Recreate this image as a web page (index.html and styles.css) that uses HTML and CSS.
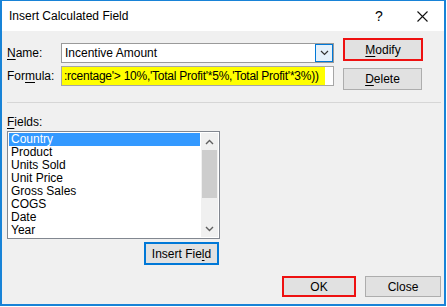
FILE: index.html
```html
<!DOCTYPE html>
<html lang="en">
<head>
    <meta charset="UTF-8">
    <title>Insert Calculated Field</title>
    <link rel="stylesheet" href="styles.css">
</head>
<body>
<div class="window">
    <div class="titlebar">
        <span class="title">Insert Calculated Field</span>
        <span class="help-btn">?</span>
        <span class="close-btn">
            <svg width="11" height="11" viewBox="0 0 11 11">
                <path d="M0.5 0.5 L10.5 10.5 M10.5 0.5 L0.5 10.5" stroke="#111" stroke-width="1.1" fill="none"/>
            </svg>
        </span>
    </div>

    <div class="dialog-body">
        <div class="top-area">
            <div class="form">
                <div class="form-row">
                    <label class="form-label"><u>N</u>ame:</label>
                    <div class="combo">
                        <span class="combo-text">Incentive Amount</span>
                        <span class="combo-btn">
                            <svg width="9" height="6" viewBox="0 0 9 6">
                                <path d="M1 1 L4.5 4.5 L8 1" stroke="#333" stroke-width="1.2" fill="none"/>
                            </svg>
                        </span>
                    </div>
                </div>
                <div class="form-row formula-row">
                    <label class="form-label">For<u>m</u>ula:</label>
                    <div class="textbox">
                        <span class="marker">:rcentage'&gt; 10%,'Total Profit'*5%,'Total Profit'*3%))</span>
                    </div>
                </div>
            </div>
            <div class="side-buttons">
                <button class="btn btn-marked btn-modify"><u>M</u>odify</button>
                <button class="btn btn-delete"><u>D</u>elete</button>
            </div>
        </div>

        <div class="separator"></div>

        <div class="fields-label"><u>F</u>ields:</div>
        <div class="listbox">
            <ul class="list-items">
                <li class="list-item selected">Country</li>
                <li class="list-item">Product</li>
                <li class="list-item">Units Sold</li>
                <li class="list-item">Unit Price</li>
                <li class="list-item">Gross Sales</li>
                <li class="list-item">COGS</li>
                <li class="list-item">Date</li>
                <li class="list-item">Year</li>
            </ul>
            <div class="scrollbar">
                <span class="scroll-arrow">
                    <svg width="9" height="6" viewBox="0 0 9 6">
                        <path d="M1 5 L4.5 1.5 L8 5" stroke="#606060" stroke-width="1.4" fill="none"/>
                    </svg>
                </span>
                <span class="scroll-thumb"></span>
                <span class="scroll-track"></span>
                <span class="scroll-arrow">
                    <svg width="9" height="6" viewBox="0 0 9 6">
                        <path d="M1 1 L4.5 4.5 L8 1" stroke="#606060" stroke-width="1.4" fill="none"/>
                    </svg>
                </span>
            </div>
        </div>
        <div class="insert-row">
            <button class="btn btn-focus">Insert Fie<u>l</u>d</button>
        </div>

        <div class="footer">
            <button class="btn btn-marked btn-ok">OK</button>
            <button class="btn btn-close">Close</button>
        </div>
    </div>
</div>
</body>
</html>
```

FILE: styles.css
```css
/*reset*/
* {
    margin: 0;
    padding: 0;
    box-sizing: border-box;
}

body {
    background-color: #fff;
    font-family: "Liberation Sans", Arial, sans-serif;
    font-size: 12px;
    color: #000;
}

li {
    list-style: none;
}

u {
    text-decoration: underline;
    text-underline-offset: 2px;
}

.window {
    width: 446px;
    height: 306px;
    border: 2px solid #1883d7;
    border-top-width: 1px;
    display: flex;
    flex-direction: column;
}

/*title bar*/
.titlebar {
    height: 30px;
    background-color: #fff;
    display: flex;
    align-items: center;
    padding-left: 7px;
}

.title {
    font-size: 12px;
    flex: 1;
}

.help-btn {
    font-size: 14px;
    width: 10px;
    margin-right: 32px;
}

.close-btn {
    display: flex;
    width: 11px;
    margin-right: 16px;
}

.dialog-body {
    flex: 1;
    background-color: #f0f0f0;
    padding: 7px 3px 0 5px;
}

/*name + formula*/
.top-area {
    display: flex;
}

.form {
    padding-top: 5px;
}

.form-row {
    display: flex;
    align-items: center;
    height: 20px;
}

.formula-row {
    margin-top: 3px;
}

.form-label {
    width: 54px;
}

.combo {
    width: 273px;
    height: 20px;
    background-color: #fff;
    border: 1px solid #9a9a9a;
    display: flex;
    align-items: center;
    justify-content: space-between;
    padding-left: 3px;
}

.combo-btn {
    width: 18px;
    height: 18px;
    border: 1px solid #0078d7;
    background-color: #e5f1fb;
    display: flex;
    align-items: center;
    justify-content: center;
}

.textbox {
    width: 273px;
    height: 20px;
    background-color: #fff;
    border: 1px solid #a6a6a6;
    white-space: nowrap;
}

/*黄色高亮，宽度随文字*/
.marker {
    display: inline-block;
    height: 18px;
    line-height: 18px;
    background-color: #ffff00;
    padding: 0 6px 0 2px;
    letter-spacing: -0.25px;
}

.side-buttons {
    margin-left: 9px;
    display: flex;
    flex-direction: column;
}

/*buttons*/
.btn {
    font-family: inherit;
    font-size: 12px;
    color: #000;
    background-color: #e1e1e1;
    border: 1px solid #adadad;
    outline: none;
}

.btn-marked {
    border: 2px solid #ee1111;
}

.btn-focus {
    border: 2px solid #0078d7;
}

.btn-modify {
    width: 80px;
    height: 23px;
}

.btn-delete {
    width: 79px;
    height: 22px;
    margin-top: 7px;
}

.separator {
    height: 1px;
    margin-top: 12px;
    background-color: #d6d6d6;
}

.fields-label {
    margin-top: 11px;
    line-height: 17px;
}

/*list box*/
.listbox {
    width: 213px;
    height: 108px;
    border: 1px solid #828790;
    background-color: #fff;
    padding: 1px;
    display: flex;
    gap: 1px;
}

.list-items {
    width: 192px;
}

.list-item {
    height: 13px;
    line-height: 13px;
    padding-left: 2px;
    white-space: nowrap;
}

.list-item.selected {
    background-color: #3399ff;
    color: #fff;
}

.scrollbar {
    width: 17px;
    background-color: #f0f0f0;
    display: flex;
    flex-direction: column;
}

.scroll-arrow {
    height: 17px;
    display: flex;
    align-items: center;
    justify-content: center;
}

.scroll-thumb {
    height: 48px;
    margin: 0 1px;
    background-color: #cdcdcd;
}

.scroll-track {
    flex: 1;
}

.insert-row {
    margin-top: 3px;
    padding-left: 137px;
}

.insert-row .btn {
    width: 75px;
    height: 23px;
}

.footer {
    margin-top: 11px;
    display: flex;
    justify-content: flex-end;
    gap: 9px;
}

.btn-ok {
    width: 74px;
    height: 21px;
}

.btn-close {
    width: 76px;
    height: 21px;
}
```
